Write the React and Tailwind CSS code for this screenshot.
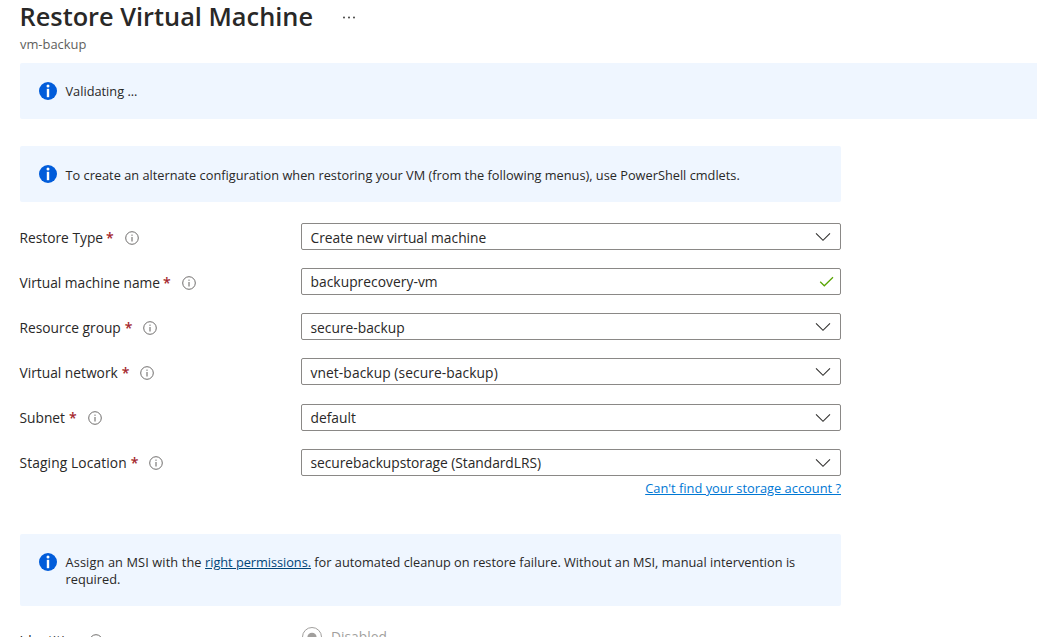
const INFO_TEXT = "-ml-[0.5px] text-[12.77px] leading-[17px] text-[#292827]";

function InfoBadge() {
  return (
    <svg className="h-[18px] w-[18px] shrink-0" viewBox="0 0 18 18">
      <circle cx="9" cy="9" r="9" fill="#015cda" />
      <rect x="7.8" y="6.8" width="2.4" height="8.4" fill="#fff" />
      <circle cx="9" cy="4.1" r="1.5" fill="#fff" />
    </svg>
  );
}

function InfoOutline() {
  return (
    <svg className="h-[14px] w-[14px] shrink-0" viewBox="0 0 14 14" fill="none">
      <circle cx="7" cy="7" r="6.3" stroke="#605e5c" strokeWidth="0.9" />
      <path d="M7 6v4.5M7 3.6v1.2" stroke="#605e5c" strokeWidth="1" />
    </svg>
  );
}

function Banner({ className, textClass = "pt-px", children }) {
  return (
    <div className={`flex gap-[9px] bg-[#eff6ff] pl-[19px] ${className}`}>
      <InfoBadge />
      <p className={`${INFO_TEXT} ${textClass}`}>{children}</p>
    </div>
  );
}

function Chevron() {
  return (
    <svg className="h-[10px] w-[16px]" viewBox="0 0 16 10" fill="none">
      <path d="M1 1.3L8 8.3L15 1.3" stroke="#323130" strokeWidth="1.1" />
    </svg>
  );
}

function Check() {
  return (
    <svg className="-mr-[3px] h-[12px] w-[16px]" viewBox="0 0 16 12" fill="none">
      <path d="M2.2 5.8L6.3 9.8L15 1.3" stroke="#57a300" strokeWidth="1.2" />
    </svg>
  );
}

const FIELDS = [
  { label: "Restore Type", value: "Create new virtual machine", gap: "mb-[18px]", labelPad: "pt-[2px]", valuePad: "pt-[2px]", labelText: "-mr-px" },
  { label: "Virtual machine name", value: "backuprecovery-vm", valid: true, gap: "mb-[18px]", labelPad: "pt-[2px]", valuePad: "tracking-[0.04px]", labelText: "-mr-px" },
  { label: "Resource group", value: "secure-backup", gap: "mb-[18px]", labelPad: "pt-[2px]", valuePad: "pt-[2px]", labelText: "" },
  { label: "Virtual network", value: "vnet-backup (secure-backup)", gap: "mb-[19px]", labelPad: "pt-[2px]", valuePad: "pt-[2px] tracking-[0.08px]", labelText: "" },
  { label: "Subnet", value: "default", gap: "mb-[18px]", labelPad: "", valuePad: "", labelText: "" },
  { label: "Staging Location", value: "securebackupstorage (StandardLRS)", gap: "", labelPad: "", valuePad: "tracking-[-0.04px]", labelText: "tracking-[0.12px]" },
];

function Field({ label, value, valid, gap, labelPad, valuePad, labelText }) {
  return (
    <div className={`flex h-[27px] items-center ${gap}`}>
      <div className={`flex w-[281px] items-center ${labelPad}`}>
        <span className={`-ml-[0.5px] text-[13.77px] leading-5 ${labelText}`}>{label}</span>
        <span className="ml-1 text-[14px] font-semibold leading-5 text-[#a4262c]">*</span>
        <span className="ml-[11px]"><InfoOutline /></span>
      </div>
      <div className="flex h-[27px] w-[540px] items-center justify-between rounded-[2px] border border-[#8a8886] pl-[9px] pr-[9px]">
        <span className={`-ml-[0.5px] text-[13.8px] leading-5 ${valuePad}`}>{value}</span>
        {valid ? <Check /> : <Chevron />}
      </div>
    </div>
  );
}

export default function App() {
  return (
    <main className="h-[637px] w-[1037px] overflow-hidden bg-white pl-5 font-['Open_Sans',sans-serif] text-[#292827]">
      <header className="flex h-[34px] items-center">
        <h1 className="-ml-[0.5px] pb-[2px] text-[25.35px] font-semibold leading-[32px]">Restore Virtual Machine</h1>
        <svg className="ml-[29px] h-[4px] w-[14px]" viewBox="0 0 14 4" fill="#323130">
          <circle cx="2" cy="2.5" r="0.9" /><circle cx="7" cy="2.5" r="0.9" /><circle cx="12" cy="2.5" r="0.9" />
        </svg>
      </header>
      <p className="h-[29px] pt-[2px] text-[12.9px] leading-[17px] text-[#605e5c]">vm-backup</p>
      <Banner className="h-[56px] rounded-l-[2px] pt-[19px]">Validating ...</Banner>
      <Banner className="mt-[27px] h-[56px] w-[821px] rounded-[2px] pt-[19px]" textClass="pt-[2px]">
        To create an alternate configuration when restoring your VM (from the following menus), use PowerShell cmdlets.
      </Banner>
      <section className="mt-[21px]">
        {FIELDS.map((f) => <Field key={f.label} {...f} />)}
      </section>
      <div className="flex h-[58px] w-[821px] justify-end pt-[4px]">
        <a className="h-[17px] text-[12.85px] leading-[17px] text-[#0078d4] underline">Can't find your storage account ?</a>
      </div>
      <Banner className="h-[72px] w-[821px] rounded-[2px] pt-[19px]">
        <span className="tracking-[0.12px]">Assign an MSI with the </span><a className="tracking-[-0.04px] text-[#004578] underline">right permissions.</a> for automated cleanup on restore failure. Without an MSI, manual intervention is<br />required.
      </Banner>
      <div className="flex items-start pt-[20px]">
        <div className="flex w-[282px] items-start pt-[5px]">
          <span className="-ml-[0.5px] text-[13.77px] leading-5">Identities</span>
          <span className="ml-[10px] pt-[3px]"><InfoOutline /></span>
        </div>
        <svg className="mt-[1px] h-[20px] w-[20px]" viewBox="0 0 20 20" fill="none">
          <circle cx="10" cy="10" r="9.5" stroke="#a19f9d" />
          <circle cx="10" cy="10.3" r="4.6" fill="#a19f9d" />
        </svg>
        <span className="ml-[9px] pt-px text-[13.8px] leading-5 text-[#a19f9d]">Disabled</span>
      </div>
    </main>
  );
}
